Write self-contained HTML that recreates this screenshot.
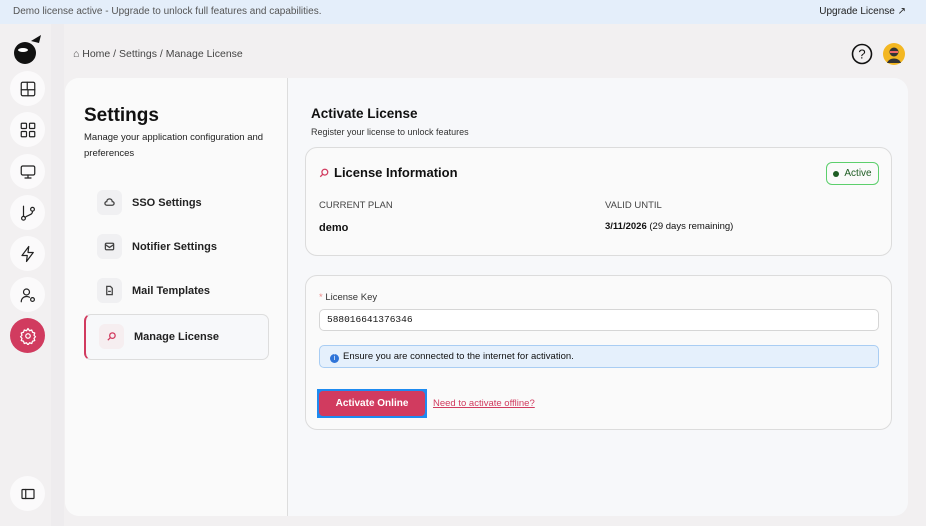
<!DOCTYPE html>
<html><head><style>
*{box-sizing:border-box;margin:0;padding:0}
body{width:926px;height:526px;overflow:hidden;background:#f2f0f1;font-family:"Liberation Sans",sans-serif;color:#111;position:relative}
.banner{position:absolute;left:0;top:0;width:926px;height:24px;background:#e4eefa;font-size:10px;color:#555;line-height:24px;padding-left:13px}
.banner .up{position:absolute;right:20px;top:0;color:#222}
.side{position:absolute;left:0;top:24px;width:51px;height:502px;background:#f2f0f1}
.strip{position:absolute;left:51px;top:24px;width:13px;height:502px;background:#eeecee}
.ic{position:absolute;left:10px;width:35px;height:35px;border-radius:50%;background:#fbfafb;display:flex;align-items:center;justify-content:center}
.ic svg{width:18px;height:18px;fill:none;stroke:#222;stroke-width:1.6;stroke-linecap:round;stroke-linejoin:round}
.ic.act{background:#d13b5f}
.ic.act svg{stroke:#fff}
.crumb{position:absolute;left:73px;top:48px;font-size:10.5px;color:#444}
.card{position:absolute;left:65px;top:78px;width:843px;height:438px;border-radius:14px;background:#f7f8fa;overflow:hidden}
.left{position:absolute;left:0;top:0;width:223px;height:438px;background:#fafafa;border-right:1px solid #ddd}
h1{position:absolute;left:19px;top:27px;font-size:19px;font-weight:bold;color:#111}
.sub{position:absolute;left:19px;top:52px;width:200px;font-size:9.5px;line-height:16px;color:#222}
.item{position:absolute;left:32px;font-size:11px;display:flex;align-items:center;font-weight:bold;color:#222}
.item .b{width:25px;height:25px;border-radius:6px;background:#f0f0f2;display:flex;align-items:center;justify-content:center;margin-right:10px}
.item svg{width:11px;height:11px;fill:none;stroke:#444;stroke-width:1.4}
.sel{position:absolute;left:19px;top:236px;width:185px;height:46px;border:1px solid #ddd;border-left:2px solid #d13b5f;border-radius:7px;background:#f7f8fa}
.right{position:absolute;left:224px;top:0;width:619px;height:438px}
.panel{position:absolute;background:#fafafa;border:1px solid #dcdcdc;border-radius:12px}
.lbl{font-size:9.5px;color:#444;position:absolute;white-space:nowrap}
</style></head><body>
<div class="banner">Demo license active - Upgrade to unlock full features and capabilities.<span class="up">Upgrade License ↗</span></div>
<div class="side"></div><div class="strip"></div>
<svg style="position:absolute;left:11px;top:33px" width="32" height="32" viewBox="0 0 32 32"><circle cx="14" cy="20" r="11" fill="#111"/><path d="M20 8 L30 2 L28 10 Z" fill="#111"/><ellipse cx="12" cy="17" rx="5" ry="2" fill="#fff"/></svg>
<div class="ic" style="top:71px"><svg viewBox="0 0 24 24"><rect x="3" y="3" width="18" height="18" rx="2"/><path d="M3 13h18M11 3v10M12 13v8"/></svg></div>
<div class="ic" style="top:112px"><svg viewBox="0 0 24 24"><rect x="3" y="3" width="7" height="7" rx="1"/><rect x="14" y="3" width="7" height="7" rx="1"/><rect x="3" y="14" width="7" height="7" rx="1"/><rect x="14" y="14" width="7" height="7" rx="1"/></svg></div>
<div class="ic" style="top:154px"><svg viewBox="0 0 24 24"><rect x="3" y="4" width="18" height="12" rx="2"/><path d="M12 16v4M8 20h8"/></svg></div>
<div class="ic" style="top:195px"><svg viewBox="0 0 24 24"><circle cx="6" cy="19" r="2.5"/><circle cx="18" cy="7" r="2.5"/><path d="M6 3v13M18 10c0 5-6 4-10 8"/></svg></div>
<div class="ic" style="top:236px"><svg viewBox="0 0 24 24"><path d="M13 2L4 14h7l-1 8 9-12h-7z"/></svg></div>
<div class="ic" style="top:277px"><svg viewBox="0 0 24 24"><circle cx="10" cy="8" r="4"/><path d="M3 21c0-4 3-7 7-7 2 0 3 .4 4 1"/><circle cx="18" cy="18" r="2.5"/></svg></div>
<div class="ic act" style="top:318px"><svg viewBox="0 0 24 24"><circle cx="12" cy="12" r="3"/><path d="M12 2l2 3 3-1 1 3 3 1-1 3 2 2-2 2 1 3-3 1-1 3-3-1-2 3-2-3-3 1-1-3-3-1 1-3-2-2 2-2-1-3 3-1 1-3 3 1z"/></svg></div>
<div class="ic" style="top:476px"><svg viewBox="0 0 24 24"><rect x="4" y="6" width="16" height="12" rx="1"/><path d="M9 6v12"/></svg></div>
<div class="crumb">⌂ Home / Settings / Manage License</div>
<svg style="position:absolute;left:851px;top:43px" width="22" height="22" viewBox="0 0 22 22"><circle cx="11" cy="11" r="9.5" fill="none" stroke="#111" stroke-width="1.6"/><text x="11" y="15.5" font-size="13" text-anchor="middle" font-family="Liberation Sans" fill="#111">?</text></svg>
<svg style="position:absolute;left:883px;top:43px" width="22" height="22" viewBox="0 0 22 22"><circle cx="11" cy="11" r="11" fill="#f3b722"/><circle cx="11" cy="9" r="4.5" fill="#333"/><path d="M4 20c2-6 12-6 14 0" fill="#333"/><rect x="7" y="8" width="8" height="2" fill="#e66"/></svg>
<div class="card">
<div class="left">
<h1>Settings</h1>
<div class="sub">Manage your application configuration and preferences</div>
<div class="item" style="top:112px"><span class="b"><svg viewBox="0 0 12 12"><path d="M3 9h6a2 2 0 0 0 0-4 3 3 0 0 0-6 0 2 2 0 0 0 0 4z"/></svg></span>SSO Settings</div>
<div class="item" style="top:156px"><span class="b"><svg viewBox="0 0 12 12"><rect x="1.5" y="2.5" width="9" height="7" rx="1"/><path d="M1.5 4l4.5 3 4.5-3"/></svg></span>Notifier Settings</div>
<div class="item" style="top:200px"><span class="b"><svg viewBox="0 0 12 12"><path d="M3 1.5h4l2 2v7H3z"/><path d="M4.5 7h3"/></svg></span>Mail Templates</div>
<div class="sel"></div>
<div class="item" style="top:246px;left:34px"><span class="b" style="background:#f6eef0"><svg viewBox="0 0 12 12" style="stroke:#d13b5f"><circle cx="7" cy="5" r="3"/><path d="M5 7l-3 3"/></svg></span>Manage License</div>
</div>
<div class="right">
<div style="position:absolute;left:22px;top:28px;font-size:13.5px;font-weight:bold;color:#111;white-space:nowrap">Activate License</div>
<div style="position:absolute;left:22px;top:49px;font-size:9px;color:#333;white-space:nowrap">Register your license to unlock features</div>
<div class="panel" style="left:16px;top:69px;width:587px;height:109px">
<svg style="position:absolute;left:13px;top:20px" width="10" height="10" viewBox="0 0 12 12"><circle cx="7" cy="5" r="3.5" fill="none" stroke="#d13b5f" stroke-width="1.5"/><path d="M4.5 7.5L1.5 10.5" stroke="#d13b5f" stroke-width="1.5"/></svg>
<div style="position:absolute;left:28px;top:17px;font-size:13px;font-weight:bold;color:#111">License Information</div>
<div style="position:absolute;right:12px;top:14px;width:53px;height:23px;border:1.5px solid #5ccf6c;border-radius:6px;font-size:10px;color:#1d5c22;display:flex;align-items:center;justify-content:center;white-space:nowrap"><span style="display:inline-block;width:6px;height:6px;border-radius:50%;background:#1d5c22;margin-right:5px"></span>Active</div>
<div class="lbl" style="left:13px;top:52px">CURRENT PLAN</div>
<div style="position:absolute;left:13px;top:74px;font-size:11px;font-weight:bold">demo</div>
<div class="lbl" style="left:299px;top:52px">VALID UNTIL</div>
<div style="position:absolute;left:299px;top:73px;font-size:9.5px;white-space:nowrap"><b>3/11/2026</b> (29 days remaining)</div>
</div>
<div class="panel" style="left:16px;top:197px;width:587px;height:155px">
<div style="position:absolute;left:13px;top:16px;font-size:9.5px;color:#333"><span style="color:#e88">*</span> License Key</div>
<div style="position:absolute;left:13px;top:33px;width:560px;height:22px;border:1px solid #d6d6d6;border-radius:5px;background:#fff;font-family:'Liberation Mono',monospace;font-size:9.5px;line-height:20px;padding-left:7px">588016641376346</div>
<div style="position:absolute;left:13px;top:69px;width:560px;height:23px;border:1px solid #a9cdf3;border-radius:5px;background:#e5f0fc;font-size:9.5px;line-height:21px;padding-left:10px"><span style="display:inline-block;width:9px;height:9px;border-radius:50%;background:#2f74d8;color:#fff;font-size:7px;line-height:9px;text-align:center;vertical-align:-1px;margin-right:4px">i</span>Ensure you are connected to the internet for activation.</div>
<div style="position:absolute;left:11px;top:113px;width:110px;height:29px;background:#1d8bf0;padding:2px"><div style="width:106px;height:25px;background:#d13b5f;border-radius:4px;color:#fff;font-size:10px;font-weight:bold;text-align:center;line-height:25px">Activate Online</div></div>
<div style="position:absolute;left:127px;top:122px;font-size:9.5px;color:#d13b5f;text-decoration:underline;white-space:nowrap">Need to activate offline?</div>
</div>
</div>
</div>
</body></html>
